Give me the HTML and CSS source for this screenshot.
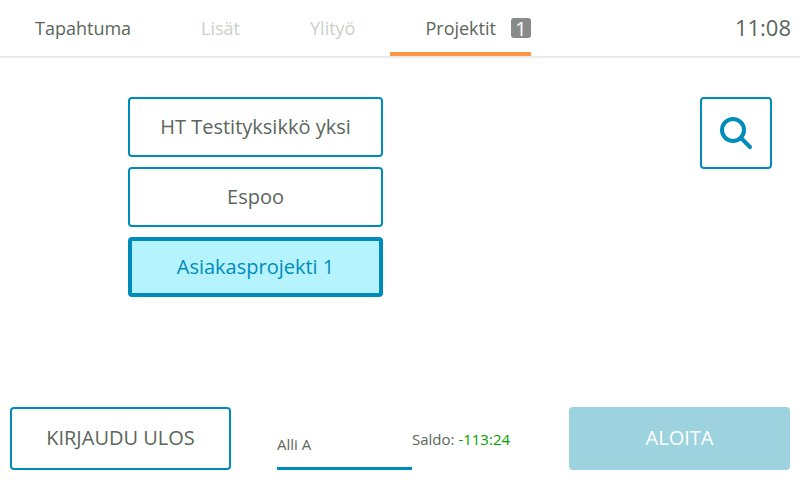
FILE: index.html
```html
<!DOCTYPE html>
<html lang="fi">
<head>
    <meta charset="UTF-8">
    <meta name="viewport" content="width=device-width, initial-scale=1.0">
    <title>Projektit</title>
    <link rel="stylesheet" href="styles.css">
</head>
<body>
    <!-- Top navigation -->
    <header class="topbar">
        <nav class="tabs">
            <a class="tab">Tapahtuma</a>
            <a class="tab disabled">Lisät</a>
            <a class="tab disabled">Ylityö</a>
            <a class="tab active">Projektit <span class="badge">1</span></a>
        </nav>
        <div class="clock">11:08</div>
    </header>

    <!-- Project selection -->
    <main class="content">
        <div class="projects">
            <button class="project">HT Testityksikkö yksi</button>
            <button class="project">Espoo</button>
            <button class="project selected">Asiakasprojekti 1</button>
        </div>
        <button class="search" aria-label="Haku">
            <svg width="34" height="34" viewBox="0 0 34 34">
                <circle cx="14" cy="14" r="11" fill="none" stroke="#008cba" stroke-width="4"/>
                <path d="M22 22 L31 31" stroke="#008cba" stroke-width="4" stroke-linecap="round"/>
            </svg>
        </button>
    </main>

    <!-- Bottom bar -->
    <footer class="bottombar">
        <button class="logout">KIRJAUDU ULOS</button>
        <div class="user">Alli A</div>
        <div class="balance">Saldo: <span class="amount">-113:24</span></div>
        <button class="start">ALOITA</button>
    </footer>
</body>
</html>
```

FILE: styles.css
```css
*, *::before, *::after {
    box-sizing: border-box;
}

body {
    font-family: 'Open Sans', sans-serif;
    margin: 0;
    background: #fff;
    color: #5b665b;
    height: 100vh;
    display: flex;
    flex-direction: column;
    overflow: hidden;
}

button {
    font-family: inherit;
    font-size: 20px;
    color: inherit;
    background: #fff;
    border: 2px solid #008cba;
    border-radius: 4px;
    padding: 0 0 2px;
}

.topbar {
    display: flex;
    justify-content: space-between;
    height: 58px;
    border-bottom: 2px solid #ebebeb;
}

.tabs {
    display: flex;
}

.tab {
    height: 56px;
    padding: 0 35px;
    font-size: 18px;
    line-height: 56px;
}

.tab.disabled {
    color: #c9d1c9;
}

.tab.active {
    display: flex;
    align-items: center;
    gap: 15px;
    padding: 4px 0 0 35px;
    border-bottom: 4px solid #ff9748;
}

.badge {
    width: 20px;
    height: 20px;
    border-radius: 3px;
    background: #898b88;
    color: #fff;
    font-size: 20px;
    line-height: 21px;
    text-align: center;
}

.clock {
    padding-right: 9px;
    font-size: 22px;
    line-height: 55px;
}

.content {
    flex: 1;
    display: flex;
    justify-content: space-between;
    align-items: flex-start;
    padding: 39px 28px 0 128px;
}

.projects {
    display: flex;
    flex-direction: column;
    gap: 10px;
}

.project {
    width: 255px;
    height: 60px;
}

.project.selected {
    background: #b5f3ff;
    border-width: 4px;
    color: #008cba;
}

.search {
    display: flex;
    align-items: center;
    justify-content: center;
    width: 72px;
    height: 72px;
    padding: 0;
}

.bottombar {
    display: flex;
    height: 73px;
    padding: 0 10px 10px;
}

.logout,
.start {
    width: 221px;
    height: 63px;
}

.user {
    width: 135px;
    height: 63px;
    margin-left: 46px;
    border-bottom: 3px solid #008cba;
    font-size: 15px;
    line-height: 75px;
}

.balance {
    font-size: 15px;
    line-height: 65px;
}

.amount {
    color: #00a000;
}

.start {
    margin-left: auto;
    background: #9dd3df;
    border: none;
    color: #fff;
}
```
